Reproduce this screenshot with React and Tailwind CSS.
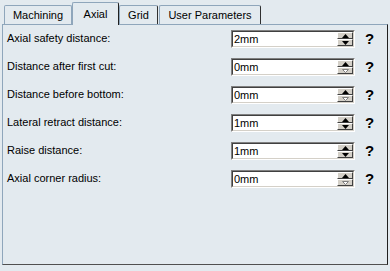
import React from 'react';

const rows = [
    { label: 'Axial safety distance:', value: '2mm', atMin: false },
    { label: 'Distance after first cut:', value: '0mm', atMin: true },
    { label: 'Distance before bottom:', value: '0mm', atMin: true },
    { label: 'Lateral retract distance:', value: '1mm', atMin: false },
    { label: 'Raise distance:', value: '1mm', atMin: false },
    { label: 'Axial corner radius:', value: '0mm', atMin: true },
];

const Arrow = ({ up, disabled }) => (
    <svg width="7" height="4" viewBox="0 0 7 4" className="block">
        {disabled ? (
            <polygon
                points={up ? '3.5,0.5 6.5,3.5 0.5,3.5' : '0.5,0.5 6.5,0.5 3.5,3.5'}
                fill="#ffffff"
                stroke="#808080"
                strokeWidth="1"
            />
        ) : (
            <polygon points={up ? '3.5,0 7,4 0,4' : '0,0 7,0 3.5,4'} fill="#000000" />
        )}
    </svg>
);

const SpinButton = ({ up, disabled }) => (
    <div className="flex-1 flex items-center justify-center bg-[#d4d0c8] border border-t-white border-l-white border-r-[#404040] border-b-[#404040]">
        <Arrow up={up} disabled={disabled} />
    </div>
);

const Tab = ({ label, active, className }) => (
    <div
        className={
            active
                ? `relative z-10 -mb-px h-[23px] bg-[#e3eaef] border-t border-l border-t-[#8fa6bb] border-l-[#8fa6bb] border-r border-r-[#202020] rounded-t-[2px] flex items-center justify-center ${className}`
                : `h-[19px] bg-[#e3eaef] border-t border-l border-t-[#8fa6bb] border-l-[#8fa6bb] border-r border-r-[#303030] rounded-t-[2px] flex items-center justify-center ${className}`
        }
    >
        <span className="leading-none">{label}</span>
    </div>
);

const App = () => {
    return (
        <div
            className="w-[390px] h-[271px] bg-[#e3eaef] text-black text-[11px] overflow-hidden"
            style={{ fontFamily: '"Liberation Sans", Arial, sans-serif' }}
        >
            {/* Tabs */}
            <div className="flex items-end h-[24px] pl-[4px]">
                <Tab label="Machining" className="w-[68px] !border-r-[#8fa6bb]" />
                <Tab label="Axial" active className="w-[47px]" />
                <Tab label="Grid" className="w-[39px]" />
                <Tab label="User Parameters" className="ml-[1px] w-[102px]" />
            </div>

            {/* Panel */}
            <div className="ml-[2px] w-[386px] h-[241px] border border-t-[#8fa6bb] border-l-[#8fa6bb] border-r-[#202020] border-b-[#505050] pt-[5px] pl-[4px] pr-[6px]">
                {rows.map((row) => (
                    <div key={row.label} className="flex h-[28px]">
                        <div className="flex-1 leading-[14px] pt-[1px]">{row.label}</div>
                        <div className="w-[124px] h-[18px] flex bg-white border border-t-[#808080] border-l-[#808080] border-r-white border-b-white">
                            <div className="flex-1 flex border border-t-[#404040] border-l-[#404040] border-r-[#d4d0c8] border-b-[#d4d0c8]">
                                <span className="flex-1 pl-[1px] leading-[14px]">{row.value}</span>
                                <div className="w-[16px] flex flex-col">
                                    <SpinButton up />
                                    <SpinButton disabled={row.atMin} />
                                </div>
                            </div>
                        </div>
                        <div className="w-[26px] pl-[3px] text-center text-[15px] font-bold leading-[18px]">?</div>
                    </div>
                ))}
            </div>
        </div>
    );
};

export default App;
